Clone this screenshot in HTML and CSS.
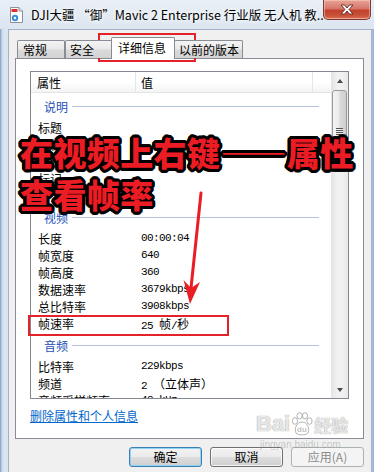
FILE: index.html
```html
<!DOCTYPE html>
<html lang="zh-CN">
<head>
<meta charset="utf-8">
<title>属性</title>
<link rel="stylesheet" href="styles.css">
</head>
<body>
<div class="window">
  <div class="titlebar">
    <svg class="app-icon" width="13" height="16" viewBox="0 0 13 16">
      <path d="M0.5 0.5 H9 L12.5 4 V15.5 H0.5 Z" fill="#fff" stroke="#8a9099"/>
      <path d="M9 0.5 V4 H12.5" fill="#e6e9ee" stroke="#8a9099"/>
      <rect x="1.5" y="2" width="6" height="3" fill="#d9322b"/>
      <circle cx="5" cy="11" r="3.2" fill="#3b8fd6"/>
      <circle cx="5" cy="11" r="1.2" fill="#fff"/>
    </svg>
    <span class="title">DJI大疆 “御”Mavic 2 Enterprise 行业版 无人机 教...</span>
    <div class="close-btn">
      <svg width="14" height="11" viewBox="0 0 14 11">
        <path d="M1 1 H4.5 L7 4 L9.5 1 H13 L9 5.5 L13 10 H9.5 L7 7 L4.5 10 H1 L5 5.5 Z" fill="#fff" stroke="#5b2a24" stroke-width="0.9" stroke-linejoin="round"/>
      </svg>
    </div>
  </div>

  <div class="client">
    <div class="tabs">
      <div class="tab t1">常规</div>
      <div class="tab t2">安全</div>
      <div class="tab active">详细信息</div>
      <div class="tab t4">以前的版本</div>
    </div>
    <div class="panel">
      <div class="listbox">
        <div class="list-main">
          <div class="list-header">
            <div class="hcell c-name">属性</div>
            <div class="hcell c-val">值</div>
            <div class="hcell c-rest"></div>
          </div>
          <div class="list-body">
            <div class="group"><span>说明</span><i class="rule"></i></div>
            <div class="row"><span class="k">标题</span><span class="v"></span></div>
            <div class="row"><span class="k">副标题</span><span class="v"></span></div>
            <div class="row"><span class="k">分级</span><span class="v"></span></div>
            <div class="row"><span class="k">标记</span><span class="v"></span></div>
            <div class="row"><span class="k">备注</span><span class="v"></span></div>
            <div class="group"><span>视频</span><i class="rule"></i></div>
            <div class="row"><span class="k">长度</span><span class="v">00:00:04</span></div>
            <div class="row"><span class="k">帧宽度</span><span class="v">640</span></div>
            <div class="row"><span class="k">帧高度</span><span class="v">360</span></div>
            <div class="row"><span class="k">数据速率</span><span class="v">3679kbps</span></div>
            <div class="row"><span class="k">总比特率</span><span class="v">3908kbps</span></div>
            <div class="row"><span class="k">帧速率</span><span class="v">25 <span class="cjk">帧</span>/<span class="cjk">秒</span></span></div>
            <div class="group"><span>音频</span><i class="rule"></i></div>
            <div class="row"><span class="k">比特率</span><span class="v">229kbps</span></div>
            <div class="row"><span class="k">频道</span><span class="v">2 <span class="cjk">（立体声）</span></span></div>
            <div class="row"><span class="k">音频采样频率</span><span class="v">48 kHz</span></div>
          </div>
        </div>
        <div class="scrollbar">
          <div class="sb-btn"><span class="tri up"></span></div>
          <div class="sb-thumb"><span class="grip"></span></div>
          <div class="sb-track"></div>
          <div class="sb-btn"><span class="tri down"></span></div>
        </div>
      </div>
      <a class="link" href="#">删除属性和个人信息</a>
    </div>
    <div class="buttons">
      <button class="btn default">确定</button>
      <button class="btn">取消</button>
      <button class="btn disabled">应用(A)</button>
    </div>
  </div>

  <div class="watermark">
    <div class="wm-top"><span class="wm-bai">Bai</span><svg class="wm-paw" width="22" height="24" viewBox="0 0 22 24"><g fill="rgba(255,255,255,0.75)" stroke="rgba(110,110,110,0.5)" stroke-width="1"><ellipse cx="4" cy="9" rx="2.6" ry="3.3"/><ellipse cx="8.5" cy="3.8" rx="2.6" ry="3.1"/><ellipse cx="14" cy="3.8" rx="2.6" ry="3.1"/><ellipse cx="18.5" cy="9" rx="2.6" ry="3.3"/><path d="M11 10 C5.5 10 3 17 5 21 C7 23.5 15 23.5 17 21 C19 17 16.5 10 11 10 Z"/></g><text x="11" y="20" text-anchor="middle" font-family="Liberation Sans" font-weight="700" font-size="8" fill="rgba(150,150,150,0.6)">du</text></svg><span class="wm-jy">经验</span></div>
    <div class="wm-url">jingyan.baidu.com</div>
  </div>

  <div class="redbox box-tab"></div>
  <div class="redbox box-row"></div>
  <svg class="arrow" width="374" height="472" viewBox="0 0 374 472">
    <line x1="201" y1="193" x2="191" y2="288" stroke="#ea1c24" stroke-width="3" stroke-linecap="round"/>
    <polygon points="183.5,280 191,288 200,282 190,304" fill="#ea1c24"/>
  </svg>
  <div class="note">
    <div>在视频上右键——属性</div>
    <div>查看帧率</div>
  </div>
</div>
</body>
</html>
```

FILE: styles.css
```css
* { box-sizing: border-box; }

html, body {
  margin: 0;
  padding: 0;
}

body {
  width: 374px;
  height: 472px;
  overflow: hidden;
  font-family: "Noto Sans CJK SC", "Noto Sans", sans-serif;
  font-size: 12px;
  color: #000;
  background: #d5e1ee;
}

.window {
  position: relative;
  width: 374px;
  height: 472px;
  background: linear-gradient(90deg, #7f9cc4 0, #c8d8ea 2px, #dbe5f0 4px, #dbe5f0 368px, #b9cde6 371px, #8fb0d8 374px);
  overflow: hidden;
}

/* ---------- title bar ---------- */
.titlebar {
  height: 29px;
  display: flex;
  align-items: center;
  padding-left: 10px;
  padding-right: 3px;
  background: linear-gradient(#e9eff6, #dbe5f0);
}

.app-icon { flex: none; }

.title {
  margin-left: 8px;
  font-size: 12.5px;
  white-space: nowrap;
  color: #000;
  text-shadow: 0 0 4px #fff, 0 0 6px #fff;
  flex: 1;
  overflow: hidden;
}

.close-btn {
  flex: none;
  align-self: flex-start;
  width: 48px;
  height: 20px;
  border: 1px solid #7c3a30;
  border-top: none;
  border-radius: 0 0 5px 5px;
  background: linear-gradient(#e6a597 0%, #d8756a 45%, #c3402d 55%, #c9553c 85%, #e07d5d 100%);
  box-shadow: inset 0 0 0 1px rgba(255, 210, 200, 0.5);
  display: flex;
  align-items: center;
  justify-content: center;
}

/* ---------- client ---------- */
.client {
  margin-left: 8px;
  width: 364px;
  height: 443px;
  border: 1px solid #a3b2c6;
  border-bottom: none;
  background: #f0f0f0;
  padding: 0 7px 0 6px;
}

.tabs {
  display: flex;
  align-items: flex-end;
  height: 29px;
  padding-left: 2px;
  margin-bottom: -1px;
  position: relative;
  z-index: 1;
}

.tab {
  height: 18px;
  margin-bottom: 1px;
  border: 1px solid #898c95;
  border-bottom: none;
  border-radius: 2px 2px 0 0;
  background: linear-gradient(#f4f4f4, #e9e9e9 45%, #dadada 55%, #d3d3d3);
  font-size: 12px;
  line-height: 17px;
  white-space: nowrap;
}

.t1 { width: 48px; padding-left: 5px; }
.t2 { width: 48px; padding-left: 4px; }
.active {
  width: 64px;
  height: 22px;
  margin-left: -2px;
  margin-bottom: 0;
  padding-left: 6px;
  background: #fff;
  line-height: 19px;
  position: relative;
  z-index: 2;
}
.t4 { width: 69px; margin-left: -1px; padding-left: 4px; }

.panel {
  height: 381px;
  border: 1px solid #898c95;
  background: #fff;
  padding: 12px 0 0 14px;
}

/* ---------- list ---------- */
.listbox {
  width: 319px;
  height: 328px;
  border: 1px solid #828790;
  display: flex;
  background: #fff;
}

.list-main {
  width: 300px;
  overflow: hidden;
}

.list-header {
  display: flex;
  height: 21px;
  border-bottom: 1px solid #e5e5e5;
  background: linear-gradient(#ffffff 0%, #ffffff 50%, #f3f4f6 100%);
}

.hcell {
  height: 20px;
  line-height: 22px;
  border-right: 1px solid #e3e6eb;
}

.c-name { width: 105px; padding-left: 6px; }
.c-val { width: 177px; padding-left: 5px; }
.c-rest { flex: 1; border-right: none; }

.group {
  height: 26px;
  display: flex;
  align-items: center;
  padding-left: 13px;
  padding-right: 12px;
  gap: 4px;
  color: #2450b8;
}

.group span { line-height: 17px; }

.rule {
  flex: 1;
  height: 1px;
  background: #b5c2e0;
}

.row {
  height: 17px;
  display: grid;
  grid-template-columns: 110px 1fr;
  line-height: 17px;
  white-space: nowrap;
}

.k { padding-left: 7px; }

.v {
  font-family: "Liberation Mono", "DejaVu Sans Mono", monospace;
  font-size: 11px;
  letter-spacing: -0.6px;
}

.cjk {
  font-family: "Noto Sans CJK SC", sans-serif;
  font-size: 12px;
  letter-spacing: 0;
}

/* ---------- scrollbar ---------- */
.scrollbar {
  width: 17px;
  display: flex;
  flex-direction: column;
  background: linear-gradient(90deg, #e4e4e4, #f1f1f1 40%, #f1f1f1 70%, #e8e8e8);
}

.sb-btn {
  height: 17px;
  display: flex;
  align-items: center;
  justify-content: center;
}

.tri {
  width: 0;
  height: 0;
  border-left: 3.5px solid transparent;
  border-right: 3.5px solid transparent;
}

.tri.up { border-bottom: 4px solid #4b4b4b; }
.tri.down { border-top: 4px solid #4b4b4b; }

.sb-thumb {
  height: 82px;
  margin: 1px 1px 0 1px;
  border: 1px solid #999;
  border-radius: 3px;
  background: linear-gradient(90deg, #f4f4f4, #eaeaea 45%, #d9d9d9 55%, #cfcfcf);
  display: flex;
  align-items: center;
  justify-content: center;
}

.grip {
  width: 7px;
  height: 7px;
  background: repeating-linear-gradient(#555 0, #555 1px, #eee 1px, #eee 2px);
}

.sb-track { flex: 1; }

/* ---------- link ---------- */
.link {
  display: inline-block;
  margin-top: 9px;
  line-height: 16px;
  color: #0066cc;
  text-decoration: underline;
  font-size: 12px;
}

/* ---------- buttons ---------- */
.buttons {
  display: flex;
  justify-content: flex-end;
  gap: 8px;
  margin-top: 8px;
}

.btn {
  width: 73px;
  height: 20px;
  padding: 0;
  border: 1px solid #707070;
  border-radius: 3px;
  background: linear-gradient(#f2f2f2 0%, #ebebeb 48%, #dddddd 52%, #cfcfcf 100%);
  box-shadow: inset 0 0 0 1px rgba(255, 255, 255, 0.75);
  font-family: "Noto Sans CJK SC", sans-serif;
  font-size: 12px;
  line-height: 18px;
  color: #000;
}

.btn.default {
  border-color: #3c7fb1;
  box-shadow: inset 0 0 0 1px #8fd3f5;
}

.btn.disabled {
  border-color: #adb2b5;
  background: #f4f4f4;
  box-shadow: none;
  color: #8b8b8b;
}

/* ---------- overlays ---------- */
.watermark {
  position: absolute;
  left: 256px;
  top: 411px;
  color: rgba(255, 255, 255, 0.8);
  pointer-events: none;
}

.wm-top {
  display: flex;
  align-items: center;
  gap: 1px;
}

.wm-bai {
  font-family: "Liberation Sans", sans-serif;
  font-weight: 700;
  font-size: 22px;
  line-height: 26px;
  text-shadow: 0 0 1px rgba(100, 100, 100, 0.6), 0 0 1px rgba(100, 100, 100, 0.4);
}

.wm-jy {
  font-size: 17px;
  font-weight: 700;
  text-shadow: 0 0 1px rgba(100, 100, 100, 0.6), 0 0 1px rgba(100, 100, 100, 0.4);
}

.wm-url {
  font-family: "Liberation Sans", sans-serif;
  font-size: 10px;
  color: rgba(130, 130, 130, 0.4);
  margin-top: 2px;
  margin-left: 4px;
}

.redbox {
  position: absolute;
  border: 2px solid #e4222a;
}

.box-tab { left: 98px; top: 33px; width: 98px; height: 29px; }
.box-row { left: 28px; top: 315px; width: 201px; height: 21px; }

.arrow {
  position: absolute;
  left: 0;
  top: 0;
  pointer-events: none;
}

.note {
  position: absolute;
  left: 20px;
  top: 131px;
  font-family: "Noto Sans CJK SC", sans-serif;
  font-size: 33px;
  line-height: 42px;
  font-weight: 900;
  letter-spacing: 0.4px;
  white-space: nowrap;
  color: #ec1c24;
  text-shadow:
    3px 0 0 #000, -3px 0 0 #000, 0 3px 0 #000, 0 -3px 0 #000,
    2px 2px 0 #000, -2px 2px 0 #000, 2px -2px 0 #000, -2px -2px 0 #000,
    3px 1px 0 #000, 3px -1px 0 #000, -3px 1px 0 #000, -3px -1px 0 #000,
    1px 3px 0 #000, -1px 3px 0 #000, 1px -3px 0 #000, -1px -3px 0 #000;
}
```
